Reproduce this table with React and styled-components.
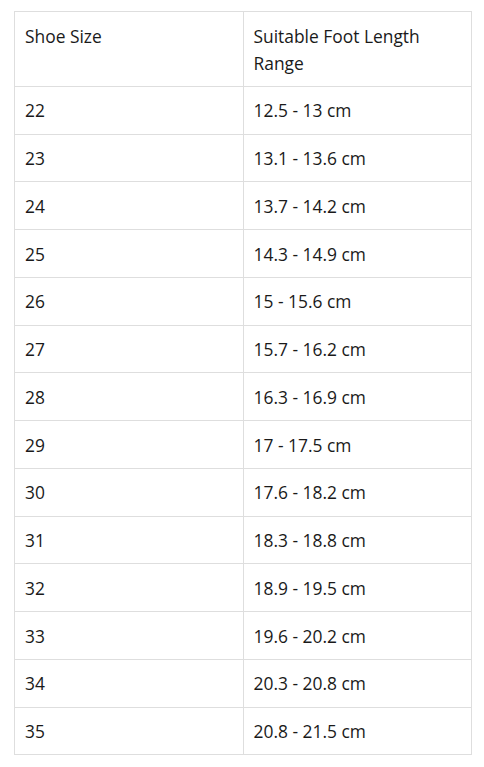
import React from "react";
import styled, { createGlobalStyle } from "styled-components";

const GlobalStyle = createGlobalStyle`
  body {
    margin: 0;
    background: #ffffff;
    font-family: "Open Sans", "Noto Sans", sans-serif;
  }
`;

// Page wrapper, table sits a little off the window edges
const Page = styled.div`
  padding: 11px 12px 13px 14px;
`;

const Table = styled.table`
  width: 100%;
  border-collapse: collapse;
  table-layout: fixed;
  color: #1a1a1a;
  font-size: 17.4px;
  line-height: 27.2px;
`;

const Cell = styled.td`
  border: 1px solid #dedede;
  padding: 10.5px 10px 9.05px 10px;
  text-align: left;
  vertical-align: top;
  font-weight: 400;
`;

const HeadCell = styled(Cell).attrs({ as: "th" })``;

const sizes = [
  { size: 22, range: "12.5 - 13 cm" },
  { size: 23, range: "13.1 - 13.6 cm" },
  { size: 24, range: "13.7 - 14.2 cm" },
  { size: 25, range: "14.3 - 14.9 cm" },
  { size: 26, range: "15 - 15.6 cm" },
  { size: 27, range: "15.7 - 16.2 cm" },
  { size: 28, range: "16.3 - 16.9 cm" },
  { size: 29, range: "17 - 17.5 cm" },
  { size: 30, range: "17.6 - 18.2 cm" },
  { size: 31, range: "18.3 - 18.8 cm" },
  { size: 32, range: "18.9 - 19.5 cm" },
  { size: 33, range: "19.6 - 20.2 cm" },
  { size: 34, range: "20.3 - 20.8 cm" },
  { size: 35, range: "20.8 - 21.5 cm" }
];

export default function App() {
  return (
    <>
      <GlobalStyle />
      <Page>
        <Table>
          <thead>
            <tr>
              <HeadCell>Shoe Size</HeadCell>
              <HeadCell>Suitable Foot Length Range</HeadCell>
            </tr>
          </thead>
          <tbody>
            {sizes.map((row) => (
              <tr key={row.size}>
                <Cell>{row.size}</Cell>
                <Cell>{row.range}</Cell>
              </tr>
            ))}
          </tbody>
        </Table>
      </Page>
    </>
  );
}
